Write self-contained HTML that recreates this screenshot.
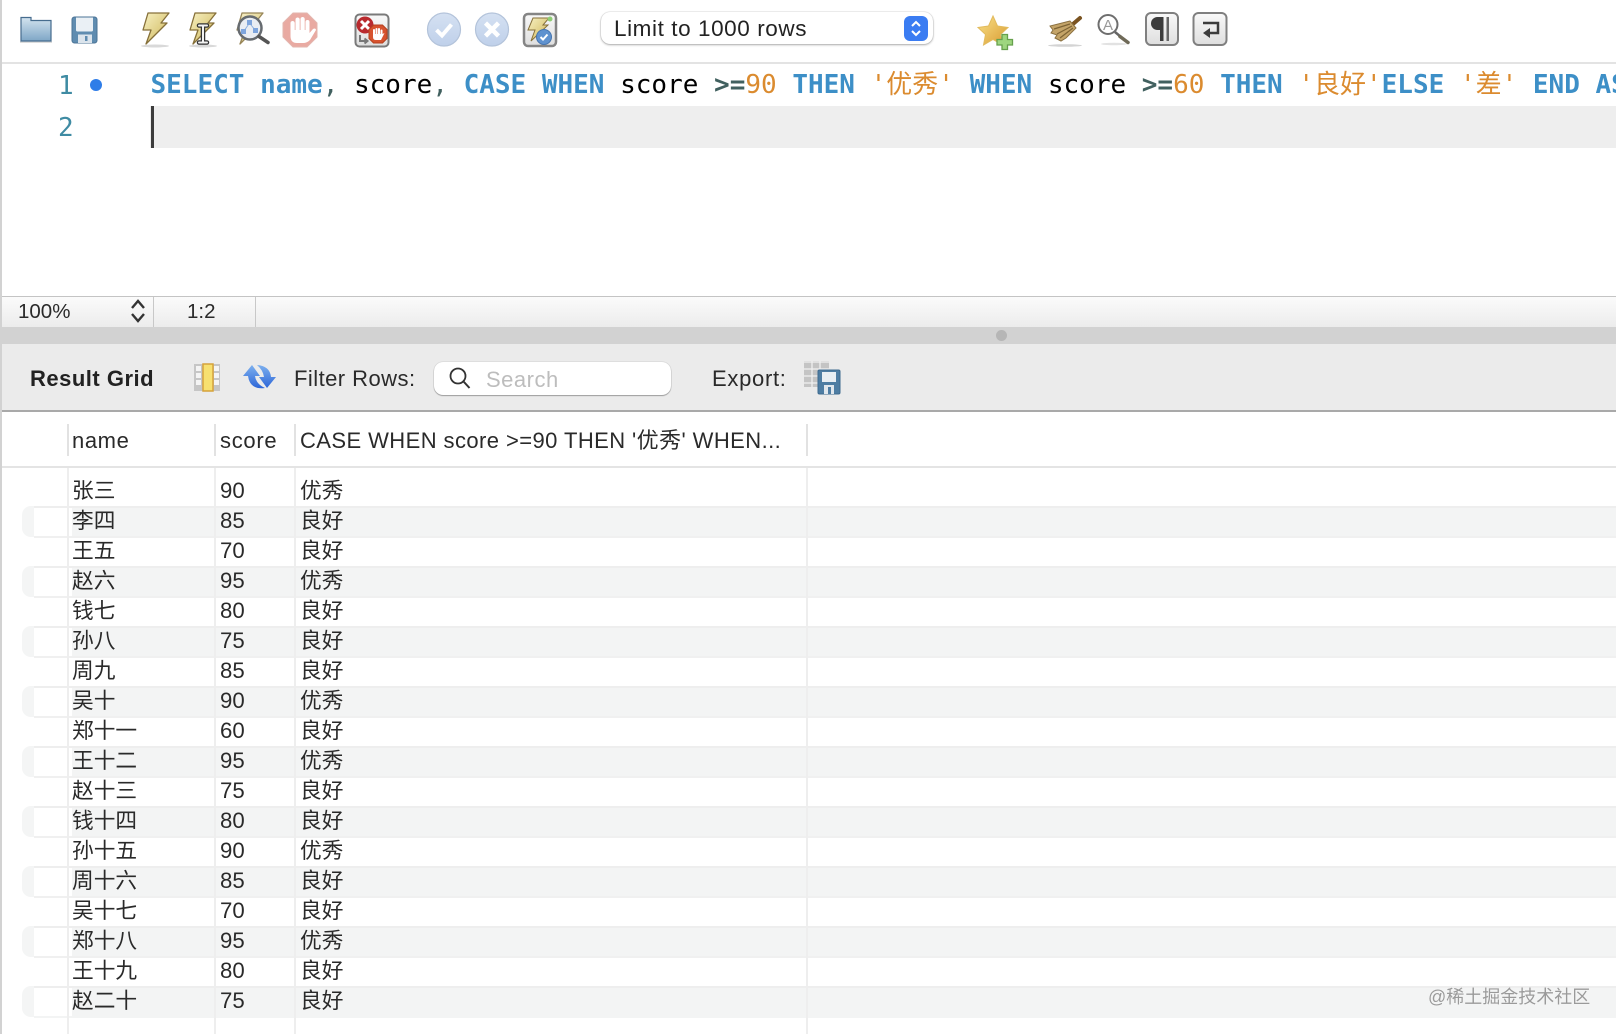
<!DOCTYPE html>
<html><head><meta charset="utf-8"><title>Result Grid</title>
<style>
html,body{margin:0;padding:0;background:#fff}
#p{position:relative;width:1616px;height:1034px;overflow:hidden;background:#fff;font-family:"Liberation Sans","Noto Sans CJK SC",sans-serif;color:#2a2a2a}
#p div{position:absolute}
#p span.a{position:absolute;top:0;white-space:nowrap}
.code{font-family:"DejaVu Sans Mono","Noto Sans CJK SC",monospace;font-size:26px;white-space:pre;left:150.5px;top:64px;height:42px;line-height:42px;color:#000}
.k{color:#3d8fc7;font-weight:bold}.s{color:#db8b2f}.o{color:#41605f;font-weight:bold}.c{color:#41605f}
.n{font-family:"DejaVu Sans Mono",monospace;font-size:26px;color:#3f8ba3;line-height:42px;height:42px;left:58px}
.t{font-size:22px;white-space:nowrap;line-height:30px;height:30px}
.b{left:34px;right:0;height:28px;background:#f3f4f4;border-top:2px solid #eeeeee;border-bottom:2px solid #f0f0f0;margin-top:-1px}
.w{left:34px;width:38px;height:28px;background:#fff;margin-top:1px}
.r{left:22px;width:12px;height:31px;background:#f4f5f5;border-radius:9px 0 0 9px;margin-top:-1px}
.v{width:2px;background:#eee;top:468px;bottom:0}
.h{width:2px;background:#e2e2e2;top:424px;height:32px}
.row{left:0;right:0;height:30px;line-height:30px;font-size:22px;color:#2a2a2a}
.row span.a:nth-child(1){left:72px;font-size:21.7px}
.row span.a:nth-child(2){left:220px;font-size:22.2px}
.row span.a:nth-child(3){left:300px;font-size:21.7px}
</style></head><body>
<div id="p">
<!-- left edge -->
<div style="left:0;top:0;width:2px;height:1034px;background:#d2d2d2;z-index:9"></div>
<!-- toolbar separator -->
<div style="left:0;top:62px;width:1616px;height:2px;background:#e3e3e3"></div>
<!-- select -->
<div style="left:601px;top:12px;width:332px;height:32px;background:#fff;border-radius:9px;box-shadow:0 0 1px rgba(0,0,0,.35),0 1px 2px rgba(0,0,0,.3)"></div>
<div style="left:614px;top:12px;height:33px;line-height:33px;font-size:22.5px;letter-spacing:.58px;color:#222;white-space:nowrap">Limit to 1000 rows</div>
<div style="left:904px;top:16px;width:24px;height:25px;background:#3a7cf2;border-radius:6px"></div>
<!-- editor -->
<div style="left:150px;top:106px;width:1466px;height:42px;background:#eeeeee"></div>
<div style="left:150.5px;top:106px;width:3px;height:42px;background:#3c3c3c"></div>
<div class="n" style="top:65px">1</div>
<div class="n" style="top:107px">2</div>
<div style="left:90px;top:78.500px;width:12px;height:12px;border-radius:50%;background:#2f7de8"></div>
<div class="code"><span class="k">SELECT name</span><span class="c">,</span> score<span class="c">,</span> <span class="k">CASE WHEN</span> score <span class="o">&gt;=</span><span class="s">90</span> <span class="k">THEN</span> <span class="s">'优秀'</span> <span class="k">WHEN</span> score <span class="o">&gt;=</span><span class="s">60</span> <span class="k">THEN</span> <span class="s">'良好'</span><span class="k">ELSE</span> <span class="s">'差'</span> <span class="k">END AS</span></div>
<!-- status bar -->
<div style="left:0;top:296px;width:1616px;height:31px;box-sizing:border-box;border-top:1px solid #c4c4c4;background:linear-gradient(#fbfbfb,#ececec)"></div>
<div style="left:153px;top:297px;width:1px;height:30px;background:#c8c8c8"></div>
<div style="left:255px;top:297px;width:1px;height:30px;background:#c8c8c8"></div>
<div style="left:18px;top:297px;height:30px;line-height:30px;font-size:20.5px;color:#2a2a2a">100%</div>
<div style="left:187px;top:297px;height:30px;line-height:30px;font-size:20.5px;color:#2a2a2a">1:2</div>
<!-- splitter -->
<div style="left:0;top:327px;width:1616px;height:17px;background:#d2d2d2"></div>
<div style="left:995.500px;top:329.500px;width:11px;height:11px;border-radius:50%;background:#b6b6b6"></div>
<!-- result toolbar -->
<div style="left:0;top:344px;width:1616px;height:66px;background:#ebebeb"></div>
<div style="left:0;top:410px;width:1616px;height:2px;background:#a9a9a9"></div>
<div style="left:30px;top:362px;height:34px;line-height:34px;font-size:22px;font-weight:bold;letter-spacing:.5px;color:#222">Result Grid</div>
<div style="left:294px;top:362px;height:34px;line-height:34px;font-size:22px;letter-spacing:.45px;color:#2a2a2a">Filter Rows:</div>
<div style="left:434px;top:362px;width:237px;height:33px;background:#fff;border-radius:9px;box-shadow:0 0 1px rgba(0,0,0,.35),0 1px 1px rgba(0,0,0,.3)"></div>
<div style="left:486px;top:363px;height:34px;line-height:34px;font-size:22px;letter-spacing:.5px;color:#bdbdbd">Search</div>
<div style="left:712px;top:362px;height:34px;line-height:34px;font-size:22px;letter-spacing:.7px;color:#2a2a2a">Export:</div>
<!-- grid header -->
<div class="h" style="left:67px"></div><div class="h" style="left:214px"></div><div class="h" style="left:294px"></div><div class="h" style="left:806px"></div>
<div class="t" style="left:72px;top:426px;letter-spacing:.6px">name</div>
<div class="t" style="left:220px;top:426px;letter-spacing:.7px">score</div>
<div class="t" style="left:300px;top:426px;letter-spacing:.42px">CASE WHEN score &gt;=90 THEN '优秀' WHEN...</div>
<div style="left:0;top:466px;width:1616px;height:2px;background:#e4e4e4"></div>
<!-- bands -->
<div class="b" style="top:507px"></div><div class="r" style="top:507px"></div><div class="w" style="top:507px"></div>
<div class="b" style="top:567px"></div><div class="r" style="top:567px"></div><div class="w" style="top:567px"></div>
<div class="b" style="top:627px"></div><div class="r" style="top:627px"></div><div class="w" style="top:627px"></div>
<div class="b" style="top:687px"></div><div class="r" style="top:687px"></div><div class="w" style="top:687px"></div>
<div class="b" style="top:747px"></div><div class="r" style="top:747px"></div><div class="w" style="top:747px"></div>
<div class="b" style="top:807px"></div><div class="r" style="top:807px"></div><div class="w" style="top:807px"></div>
<div class="b" style="top:867px"></div><div class="r" style="top:867px"></div><div class="w" style="top:867px"></div>
<div class="b" style="top:927px"></div><div class="r" style="top:927px"></div><div class="w" style="top:927px"></div>
<div class="b" style="top:987px;border-bottom-color:#f3f4f4"></div><div class="r" style="top:987px"></div><div class="w" style="top:987px"></div>
<div class="v" style="left:67px"></div><div class="v" style="left:214px"></div><div class="v" style="left:294px"></div><div class="v" style="left:806px"></div>
<!-- rows -->
<div class="row" style="top:476px"><span class="a">张三</span><span class="a">90</span><span class="a">优秀</span></div>
<div class="row" style="top:506px"><span class="a">李四</span><span class="a">85</span><span class="a">良好</span></div>
<div class="row" style="top:536px"><span class="a">王五</span><span class="a">70</span><span class="a">良好</span></div>
<div class="row" style="top:566px"><span class="a">赵六</span><span class="a">95</span><span class="a">优秀</span></div>
<div class="row" style="top:596px"><span class="a">钱七</span><span class="a">80</span><span class="a">良好</span></div>
<div class="row" style="top:626px"><span class="a">孙八</span><span class="a">75</span><span class="a">良好</span></div>
<div class="row" style="top:656px"><span class="a">周九</span><span class="a">85</span><span class="a">良好</span></div>
<div class="row" style="top:686px"><span class="a">吴十</span><span class="a">90</span><span class="a">优秀</span></div>
<div class="row" style="top:716px"><span class="a">郑十一</span><span class="a">60</span><span class="a">良好</span></div>
<div class="row" style="top:746px"><span class="a">王十二</span><span class="a">95</span><span class="a">优秀</span></div>
<div class="row" style="top:776px"><span class="a">赵十三</span><span class="a">75</span><span class="a">良好</span></div>
<div class="row" style="top:806px"><span class="a">钱十四</span><span class="a">80</span><span class="a">良好</span></div>
<div class="row" style="top:836px"><span class="a">孙十五</span><span class="a">90</span><span class="a">优秀</span></div>
<div class="row" style="top:866px"><span class="a">周十六</span><span class="a">85</span><span class="a">良好</span></div>
<div class="row" style="top:896px"><span class="a">吴十七</span><span class="a">70</span><span class="a">良好</span></div>
<div class="row" style="top:926px"><span class="a">郑十八</span><span class="a">95</span><span class="a">优秀</span></div>
<div class="row" style="top:956px"><span class="a">王十九</span><span class="a">80</span><span class="a">良好</span></div>
<div class="row" style="top:986px"><span class="a">赵二十</span><span class="a">75</span><span class="a">良好</span></div>
<!-- watermark -->
<div style="left:1428px;top:983px;height:28px;line-height:28px;font-size:18px;color:#9a9a9a;white-space:nowrap;text-shadow:0 0 1px rgba(255,255,255,.8)">@稀土掘金技术社区</div>
<!-- icons -->
<svg width="1616" height="1034" viewBox="0 0 1616 1034" style="position:absolute;left:0;top:0;z-index:5">
<defs>
<linearGradient id="gf" x1="0" y1="0" x2="0" y2="1"><stop offset="0" stop-color="#d3e3ef"/><stop offset="1" stop-color="#7ea6c6"/></linearGradient>
<linearGradient id="gb" x1="0" y1="0" x2="1" y2="1"><stop offset="0" stop-color="#f7f0c2"/><stop offset="1" stop-color="#cdb556"/></linearGradient>
<linearGradient id="gc" x1="0" y1="0" x2="0" y2="1"><stop offset="0" stop-color="#d5e1f2"/><stop offset="1" stop-color="#bfd0ea"/></linearGradient>
<linearGradient id="gg" x1="0" y1="0" x2="0" y2="1"><stop offset="0" stop-color="#f9f9f9"/><stop offset="1" stop-color="#dedede"/></linearGradient>
<linearGradient id="gs" x1="0" y1="0" x2="1" y2="1"><stop offset="0" stop-color="#f9e28a"/><stop offset="1" stop-color="#d99a30"/></linearGradient>
<linearGradient id="ga" x1="0" y1="0" x2="0" y2="1"><stop offset="0" stop-color="#7db0ee"/><stop offset="1" stop-color="#2d66d8"/></linearGradient>
<path id="bolt" d="M148 13H169L161 23H167L146 44L151 30H143Z" fill="url(#gb)" stroke="#86703a" stroke-width="1.300" stroke-linejoin="round"/>
</defs>
<!-- folder -->
<rect x="20" y="41" width="32" height="2" fill="#dcdcdc"/>
<path d="M21 19.500V17.500H31V20.500H51V41H21Z" fill="url(#gf)" stroke="#466c8e" stroke-width="1.200"/>
<!-- save -->
<rect x="72" y="17" width="25" height="26" rx="2.500" fill="#5f8cb0" stroke="#4b7396"/>
<path d="M76 17.500H93V30a1.500 1.500 0 0 1-1.500 1.500H77.500A1.500 1.500 0 0 1 76 30Z" fill="#eaf0f5"/>
<rect x="78" y="34.500" width="14" height="8.500" fill="#dbe4ec"/><rect x="85" y="36" width="2.500" height="5" fill="#5f8cb0"/>
<!-- bolts -->
<ellipse cx="155" cy="46" rx="14" ry="1.500" fill="#d9d9d9"/>
<use href="#bolt"/>
<ellipse cx="203" cy="46" rx="14" ry="1.500" fill="#d9d9d9"/>
<use href="#bolt" x="47"/>
<path d="M199 25.500h8M203 25.500V42M199 42.500h8" stroke="#333" stroke-width="4.500" stroke-linecap="round" fill="none"/>
<path d="M199 25.500h8M203 25.500V42M199 42.500h8" stroke="#f2f2f2" stroke-width="2" stroke-linecap="round" fill="none"/>
<use href="#bolt" x="94" opacity=".85"/>
<circle cx="250" cy="28" r="11.500" fill="#e9edf3" stroke="#666b70" stroke-width="2.500"/>
<path d="M259 36.500L268 42.500" stroke="#555" stroke-width="3.500" stroke-linecap="round"/>
<path d="M249.500 23L244 31M249.500 23L255 30" stroke="#8fb0de" stroke-width="1"/>
<rect x="247" y="20" width="5" height="5" fill="#7ea5dd"/><rect x="241" y="29" width="5" height="5" fill="#7ea5dd"/><rect x="253" y="28" width="5" height="5" fill="#7ea5dd"/>
<!-- stop -->
<path d="M293 13H307L317 23V37L307 47H293L283 37V23Z" fill="#e9aaa2" stroke="#e3b5ae" stroke-width="1"/>
<g fill="#fff">
<rect x="290.500" y="21" width="4.200" height="16" rx="2.100"/><rect x="295.500" y="17.500" width="4.200" height="18" rx="2.100"/><rect x="300.500" y="17" width="4.200" height="18" rx="2.100"/><rect x="305.500" y="20" width="4" height="16" rx="2"/>
<path d="M290.500 30H309.500V33L313 29Q315.500 27.500 316 30L310 40Q307 43 303 43H297Q290.500 43 290.500 36Z"/>
</g>
<!-- x-stop box -->
<rect x="355.500" y="14.500" width="33" height="32" rx="4" fill="url(#gg)" stroke="#7a7a7a" stroke-width="2"/>
<circle cx="365" cy="25" r="8.500" fill="#b92a2e"/>
<path d="M361 21l8 8m0-8l-8 8" stroke="#fff" stroke-width="3"/>
<path d="M373.500 25H382.500L387 29.500V38.500L382.500 43H373.500L369 38.500V29.500Z" fill="#d7522e" stroke="#b5401f"/>
<g fill="#fff"><rect x="373" y="29" width="2" height="8" rx="1"/><rect x="375.500" y="28" width="2" height="8" rx="1"/><rect x="378" y="28" width="2" height="8" rx="1"/><rect x="380.500" y="29.500" width="2" height="7" rx="1"/><path d="M373 34H382.500L384.500 33L381 40H376Q373 40 373 37Z"/></g>
<path d="M360 35V41H367M364.500 38.500l3 2.500-3 2.500" fill="none" stroke="#777" stroke-width="2"/>
<!-- check / x -->
<circle cx="444" cy="29.500" r="16.500" fill="url(#gc)" stroke="#b3c3da" stroke-width="1.200"/>
<path d="M436.500 30l5.500 5.500 9.500-11" fill="none" stroke="#fff" stroke-width="4"/>
<circle cx="492" cy="29.500" r="16.500" fill="url(#gc)" stroke="#b3c3da" stroke-width="1.200"/>
<path d="M485.500 23l13 13m0-13l-13 13" fill="none" stroke="#fff" stroke-width="4.500"/>
<!-- bolt box -->
<rect x="524" y="14" width="32" height="32" rx="4" fill="url(#gg)" stroke="#858585" stroke-width="2.500"/>
<path d="M533 18H549L543 25H548L531 41L535 30H528Z" fill="url(#gb)" stroke="#86703a"/>
<circle cx="544" cy="37" r="7.500" fill="#5f92cf" stroke="#4574ae"/>
<path d="M540.500 37l2.500 2.500 4.500-5" fill="none" stroke="#fff" stroke-width="2"/>
<circle cx="550" cy="19" r="2.500" fill="#8fce75"/>
<!-- select chevrons -->
<path d="M912 26l4-4 4 4M912 31l4 4 4-4" fill="none" stroke="#fff" stroke-width="2"/>
<!-- star -->
<path d="M993 16L997.500 26L1008 27.500L1000.500 34.500L1002.500 45L993 39.500L983.500 45L985.500 34.500L978 27.500L988.500 26Z" fill="url(#gs)" stroke="#e2bb5e" stroke-width="1"/>
<path d="M1002 34.500h5.500v5h5v5.500h-5v4.500h-5.500v-4.500h-5v-5.500h5z" fill="#9ed67f" stroke="#66a04d" stroke-width="1.300"/>
<!-- broom -->
<ellipse cx="1065" cy="45.500" rx="17" ry="1.300" fill="#d4d4d4"/>
<path d="M1073 24L1080 18" stroke="#7a5320" stroke-width="4" stroke-linecap="round"/>
<path d="M1070 21L1050 26L1053 30L1051 33L1057 35L1055 38L1061 41L1066 38L1076 28Z" fill="#c4a468" stroke="#8a7040" stroke-width="1"/>
<path d="M1070 24L1054 29M1072 26L1057 34M1073 28L1060 38" stroke="#7d6334" stroke-width="1.200" fill="none"/>
<!-- mag A -->
<ellipse cx="1114" cy="44" rx="13" ry="1.200" fill="#e2e2e2"/>
<circle cx="1108" cy="24.500" r="9.500" fill="#fff" stroke="#6e6e6e" stroke-width="2"/>
<text x="1108" y="30" text-anchor="middle" font-family="Liberation Sans" font-size="15" fill="#999">A</text>
<path d="M1115 32L1121 37" stroke="#666" stroke-width="2.500"/><path d="M1120 36.500L1128 42.500" stroke="#6f6a58" stroke-width="3.500" stroke-linecap="round"/>
<!-- pilcrow -->
<rect x="1146" y="13" width="32" height="32" rx="5" fill="url(#gg)" stroke="#808080" stroke-width="2"/>
<path d="M1165 17H1157.500a6.500 6.500 0 0 0 0 13H1160V41H1163.500V17Z" fill="#3c3c3c"/>
<rect x="1166.500" y="17" width="2.500" height="24" fill="#666"/>
<!-- wrap -->
<rect x="1193.500" y="13" width="33" height="32" rx="5" fill="url(#gg)" stroke="#808080" stroke-width="2"/>
<path d="M1203 23H1218V33H1209" fill="none" stroke="#3c3c3c" stroke-width="2.500"/>
<path d="M1203 33l7-5v10Z" fill="#3c3c3c"/>
<!-- status stepper -->
<path d="M132 308l6-7 6 7M132 314l6 7 6-7" fill="none" stroke="#333" stroke-width="2.400"/>
<!-- columns icon -->
<rect x="194" y="364" width="26" height="27" fill="#c6c6c6"/>
<g fill="#f4f4f4"><rect x="196" y="366" width="5" height="5"/><rect x="196" y="373" width="5" height="5"/><rect x="196" y="380" width="5" height="5"/><rect x="214" y="366" width="5" height="5"/><rect x="214" y="373" width="5" height="5"/><rect x="214" y="380" width="5" height="5"/></g>
<rect x="203" y="364" width="10" height="27" fill="#f7e070" stroke="#d6a23a" stroke-width="1.500"/>
<!-- refresh -->
<path d="M243 376L252 365L260 376H255Q256 384 265 388Q250 390 248 376Z" fill="url(#ga)"/>
<path d="M257 365Q270 366 271 377H276L267 388L259 377H264Q263 370 257 365Z" fill="url(#ga)"/>
<!-- search magnifier -->
<circle cx="458" cy="376" r="7.500" fill="none" stroke="#333" stroke-width="1.800"/><path d="M463.500 381.500l6 6.500" stroke="#333" stroke-width="2"/>
<!-- export -->
<rect x="804" y="361" width="25" height="26" fill="#c4c4c4"/>
<path d="M804 362H829M804 369H829M804 376H829M804 383H829M812 361V387M820 361V387" stroke="#f0f0f0" stroke-width="1.300"/>
<rect x="818" y="370" width="22" height="24" rx="1.500" fill="#4e7da3" stroke="#3f6b8f"/>
<rect x="822" y="372" width="14" height="10" fill="#e8eef3"/><rect x="824" y="385" width="10" height="9" fill="#e0e7ed"/><rect x="828" y="387" width="3" height="7" fill="#4e7da3"/>
</svg>
</div>
</body></html>
